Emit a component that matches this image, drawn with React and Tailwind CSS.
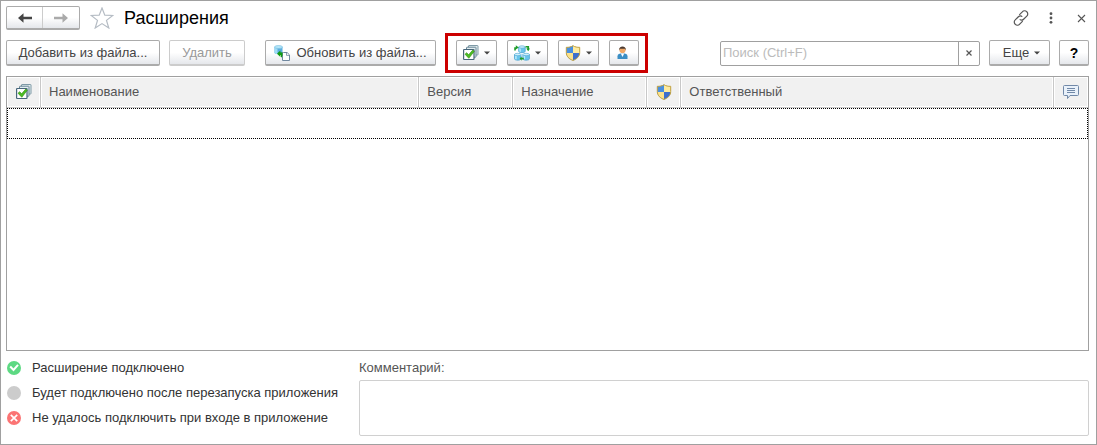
import { useState } from "react";

const buttonBase =
  "flex h-[26px] shrink-0 items-center justify-center rounded-xs border border-b-2 bg-linear-to-b from-white from-50% to-gray-200 whitespace-nowrap";
const button = `${buttonBase} border-[#ababab] text-[#444444]`;
const cell = "border-r border-b border-[#c8c8c8] shadow-[inset_0_0_0_1px_white]";
const headCell = `${cell} px-2 text-left font-normal`;

function Caret() {
  return (
    <svg width="6" height="4" viewBox="0 0 6 4" aria-hidden="true">
      <path d="M0 0.5h6L3 3.5z" fill="#444" />
    </svg>
  );
}

function ArrowIcon({ className }) {
  return (
    <svg width="14" height="10" viewBox="0 0 14 10" className={className} aria-hidden="true">
      <path d="M0 5L5.5 0.2V3.8H14v2.4H5.5v3.6z" fill="currentColor" />
    </svg>
  );
}

function StackCheckIcon() {
  return (
    <svg width="16" height="16" viewBox="0 0 16 16" fill="#e3edf0" aria-hidden="true">
      <rect x="5.5" y="0.5" width="9.5" height="9.5" rx="0.5" stroke="#7f9aa6" />
      <rect x="3.5" y="2.2" width="9.5" height="10" rx="0.5" stroke="#668594" />
      <rect x="0.6" y="4.5" width="10.4" height="10" rx="0.5" fill="#fff" stroke="#47667b" strokeWidth="1.2" />
      <path d="M2 9.2l1.7-1.5 1.9 2.1L9.800 5l1.500 1.300-5.500 7z" fill="#4bbd22" stroke="#2b8a0e" strokeWidth="0.6" />
    </svg>
  );
}

function ImportIcon() {
  return (
    <svg width="16" height="16" viewBox="0 0 16 16" aria-hidden="true">
      <path d="M0.500 2v5.800c0 1.800 8 1.800 8 0V2z" fill="#5cadde" />
      <path d="M0.500 2v5.800c0 .800 1.400 1.300 3 1.300V2z" fill="#9fdcf5" />
      <ellipse cx="4.500" cy="2" rx="4" ry="1.500" fill="#b4e6f8" stroke="#72bbdf" strokeWidth="0.600" />
      <path d="M3 8.800L6.400 5.600v2.200H9v4.400H7V9.900H6.400V12z" fill="#129c12" />
      <path d="M9.500 7.500h3.600l2.400 2.400v5.600H8.500v-8z" fill="#fff" stroke="#7188a0" />
      <path d="M12.500 7.800v2.600h2.600" fill="none" stroke="#7188a0" strokeWidth="0.800" />
      <path d="M4.500 8.200h3.200v2.600" fill="none" stroke="#129c12" strokeWidth="1.600" />
    </svg>
  );
}

function Cylinder({ x, y }) {
  return (
    <g transform={`translate(${x} ${y})`}>
      <path d="M0.500 1.800v4.200c0 1.800 6.500 1.800 6.500 0V1.800z" fill="#68c4ec" stroke="#4aa3d2" strokeWidth="0.800" />
      <path d="M1.100 2.600v3.700l1.600.500V3z" fill="#b4e8f9" />
      <ellipse cx="3.750" cy="1.700" rx="3.200" ry="1.200" fill="#cdf0fb" stroke="#4aa3d2" strokeWidth="0.600" />
    </g>
  );
}

function ClusterIcon() {
  return (
    <svg width="16" height="16" viewBox="0 0 16 16" aria-hidden="true">
      <Cylinder x={4.2} y={0.3} />
      <Cylinder x={0} y={7.8} />
      <Cylinder x={8.400} y={7.8} />
      <g fill="#1f9d2b">
        <path d="M0.200 5.500V2.200h1.600V0.300L4.800 2.500 1.800 4.500v1z" />
        <path d="M11.500 1h3.600v2.500H16L14.200 6.300 12.200 3.500h1.100V2.600h-1.800z" />
        <path d="M9.800 14.600H7.600v1.200L5.600 13.600 7.600 11.400v1.400h2.200z" />
      </g>
    </svg>
  );
}

function ShieldIcon() {
  return (
    <svg width="16" height="16" viewBox="0 0 16 16" aria-hidden="true">
      <path d="M8 0.600C6.200 1.900 3.600 2.500 1.300 2.300V7.500C1.300 11.500 4.300 14.200 8 15.500z" fill="#4a90e0" />
      <path d="M8 0.600C9.800 1.900 12.400 2.500 14.700 2.300V7.500C14.700 11.500 11.700 14.200 8 15.500z" fill="#fdeba0" />
      <path d="M1.300 8H8v7.500C4.300 14.200 1.500 11.500 1.300 8z" fill="#fce28a" />
      <path d="M8 8h6.700C14.500 11.500 11.700 14.200 8 15.500z" fill="#3d6fcc" />
      <path
        d="M8 0.700C6.200 1.900 3.600 2.500 1.300 2.300V7.500C1.300 11.500 4.300 14.200 8 15.400C11.700 14.200 14.700 11.500 14.700 7.500V2.300C12.400 2.500 9.800 1.900 8 0.700z"
        fill="none"
        stroke="#c0a040"
      />
    </svg>
  );
}

function UserIcon() {
  return (
    <svg width="16" height="16" viewBox="0 0 16 16" aria-hidden="true">
      <path d="M1.500 14v-2.800C1.500 9 3.500 8.500 6.500 8.500s5 .500 5 2.700V14z" fill="#3b8ec4" />
      <path d="M4.800 8.500L6.500 12 8.200 8.500z" fill="#fff" />
      <circle cx="6.500" cy="5" r="3.100" fill="#f0a868" />
      <path d="M3 5.500C2.600 0 10.400 0 10 5.500L9 3.800H4z" fill="#4b3b32" />
    </svg>
  );
}

function CommentIcon() {
  return (
    <svg width="16" height="14" viewBox="0 0 16 14" fill="none" stroke="#7189a8" aria-hidden="true">
      <path d="M1.500 0.500h13q1 0 1 1v8q0 1-1 1H7L4.500 13.500V10.500h-3q-1 0-1-1v-8q0-1 1-1z" fill="#e9f1fa" />
      <path d="M4 3.500h8M4 5.500h8M4 7.500h8" />
    </svg>
  );
}

function StatusIcon({ status }) {
  return (
    <svg width="14" height="14" viewBox="0 0 14 14" fill="none" stroke="#fff" strokeWidth="2" aria-hidden="true">
      {status === "ok" && (
        <>
          <circle cx="7" cy="7" r="7" fill="#5dd983" stroke="none" />
          <path d="M3.200 5.500L6.500 9 11 3.800" />
        </>
      )}
      {status === "pending" && <circle cx="7" cy="7" r="7" fill="#cccccc" stroke="none" />}
      {status === "failed" && (
        <>
          <circle cx="7" cy="7" r="7" fill="#fb7474" stroke="none" />
          <path d="M3.800 3.800l6.400 6.400M10.200 3.800l-6.400 6.400" strokeWidth="1.700" />
        </>
      )}
    </svg>
  );
}

const legend = [
  { status: "ok", text: "Расширение подключено" },
  { status: "pending", text: "Будет подключено после перезапуска приложения" },
  { status: "failed", text: "Не удалось подключить при входе в приложение" },
];

export default function App() {
  const [search, setSearch] = useState("");
  const [comment, setComment] = useState("");

  return (
    <div className="flex min-h-screen flex-col border border-[#a0a0a0] bg-white pt-[5px] pr-[7px] pb-2 pl-[5px] font-['Liberation_Sans',Arial,sans-serif] text-[13px] text-[#333333]">
      {/* Title */}
      <header className="flex h-6 items-center">
        <div className="flex h-full rounded-xs border border-b-2 border-[#ababab] bg-linear-to-b from-white from-50% to-gray-200">
          <button type="button" aria-label="Назад" className="flex w-9 items-center justify-center border-r border-[#cccccc]">
            <ArrowIcon className="text-[#444444]" />
          </button>
          <button type="button" aria-label="Вперед" className="flex w-9 items-center justify-center">
            <ArrowIcon className="rotate-180 text-[#aaaaaa]" />
          </button>
        </div>
        <button type="button" aria-label="В избранное" className="ml-2.5">
          <svg width="24" height="22" viewBox="0 0 24 22" fill="none" stroke="#b5bcc4" strokeWidth="1.200" aria-hidden="true">
            <path d="M12 1l2.800 7.200 8 .300-6.300 4.900 2.300 7.600L12 16.600 5.200 21l2.300-7.600L1.200 8.500l8-.300z" />
          </svg>
        </button>
        <h1 className="ml-2.5 text-lg text-black">Расширения</h1>
        <div className="mr-[3px] ml-auto flex items-center text-[#555555]">
          <button type="button" aria-label="Получить ссылку">
            <svg width="16" height="16" viewBox="0 0 16 16" fill="none" stroke="currentColor" strokeWidth="1.200" aria-hidden="true">
              <path d="M6.300 4.800L9.300 1.800a2.900 2.900 0 0 1 4.500 0 2.900 2.900 0 0 1 0 4.300L10.600 9.200a2.900 2.900 0 0 1-3.900.200" />
              <path d="M9.700 11.200L6.700 14.200a2.900 2.900 0 0 1-4.500 0 2.900 2.900 0 0 1 0-4.300L5.400 6.800a2.900 2.900 0 0 1 3.900-.200" />
            </svg>
          </button>
          <button type="button" aria-label="Меню" className="ml-5">
            <svg width="4" height="12" viewBox="0 0 4 12" fill="currentColor" aria-hidden="true">
              <circle cx="2" cy="1.700" r="1.400" />
              <circle cx="2" cy="6" r="1.400" />
              <circle cx="2" cy="10.300" r="1.400" />
            </svg>
          </button>
          <button type="button" aria-label="Закрыть" className="ml-6">
            <svg width="9" height="9" viewBox="0 0 9 9" stroke="currentColor" strokeWidth="1.100" aria-hidden="true">
              <path d="M1 1l7 7M8 1L1 8" />
            </svg>
          </button>
        </div>
      </header>

      {/* Toolbar */}
      <div className="mt-2.5 flex h-[26px] items-center">
        <button type="button" className={`${button} w-[154px]`}>Добавить из файла...</button>
        <button type="button" disabled className={`${buttonBase} ml-[9px] w-[76px] border-[#cccccc] text-[#999999]`}>
          Удалить
        </button>
        <button type="button" className={`${button} ml-5 w-[171px] gap-1.5`}>
          <ImportIcon />
          Обновить из файла...
        </button>

        <div className="ml-[9px] flex shrink-0 gap-2.5 border-3 border-[#cc0000] py-1 pr-1.5 pl-2">
          <button type="button" aria-label="Подключение" className={`${button} w-[41px] gap-[5px]`}>
            <StackCheckIcon />
            <Caret />
          </button>
          <button type="button" aria-label="Распределенная база" className={`${button} w-[41px] gap-[5px]`}>
            <ClusterIcon />
            <Caret />
          </button>
          <button type="button" aria-label="Безопасный режим" className={`${button} w-[41px] gap-[5px]`}>
            <ShieldIcon />
            <Caret />
          </button>
          <button type="button" aria-label="Ответственный" className={`${button} w-[30px]`}>
            <UserIcon />
          </button>
        </div>

        <div className="ml-auto flex h-[25px] w-[260px] rounded-xs border border-[#a0a0a0]">
          <input
            type="text"
            aria-label="Поиск"
            placeholder="Поиск (Ctrl+F)"
            value={search}
            onChange={(e) => setSearch(e.target.value)}
            className="min-w-0 flex-1 px-0.5 outline-none placeholder:text-[#bbbbbb]"
          />
          <button
            type="button"
            aria-label="Очистить"
            onClick={() => setSearch("")}
            className="flex w-[21px] items-center justify-center border-l border-[#a0a0a0]"
          >
            <svg width="6" height="6" viewBox="0 0 6 6" stroke="#555" strokeWidth="1.200" aria-hidden="true">
              <path d="M0.500 0.500l5 5M5.500 0.500l-5 5" />
            </svg>
          </button>
        </div>
        <button type="button" className={`${button} ml-[9px] w-[61px] gap-[5px] pl-1`}>
          Еще
          <Caret />
        </button>
        <button type="button" aria-label="Справка" className={`${button} ml-[9px] w-[30px] text-sm font-bold text-black`}>
          ?
        </button>
      </div>

      {/* Extensions list */}
      <div className="mt-2.5 flex-1 border border-[#a0a0a0]">
        <table className="w-full table-fixed border-separate border-spacing-0 text-[#555555]">
          <thead className="bg-[#f1f1f1]">
            <tr className="h-[31px]">
              <th className={`${cell} w-[34px]`} aria-label="Подключено">
                <span className="flex justify-center"><StackCheckIcon /></span>
              </th>
              <th className={`${headCell} w-[35%]`}>Наименование</th>
              <th className={`${headCell} w-[94px]`}>Версия</th>
              <th className={`${headCell} w-[134px]`}>Назначение</th>
              <th className={`${cell} w-[34px]`} aria-label="Безопасный режим">
                <span className="flex justify-center"><ShieldIcon /></span>
              </th>
              <th className={headCell}>Ответственный</th>
              <th className={`${cell} w-[34px] border-r-0`} aria-label="Комментарий">
                <span className="flex justify-center"><CommentIcon /></span>
              </th>
            </tr>
          </thead>
          <tbody>
            <tr>
              <td colSpan={7} className="h-[31px] border border-dotted border-black" />
            </tr>
          </tbody>
        </table>
      </div>

      <footer className="flex pt-[7px]">
        <ul className="w-[353px] shrink-0 space-y-[5px]">
          {legend.map((item) => (
            <li key={item.status} className="flex h-5 items-center gap-[11px] pl-px">
              <StatusIcon status={item.status} />
              {item.text}
            </li>
          ))}
        </ul>
        <div className="flex flex-1 flex-col gap-0.5">
          <label htmlFor="comment" className="h-5 leading-5 text-[#555555]">Комментарий:</label>
          <textarea
            id="comment"
            value={comment}
            onChange={(e) => setComment(e.target.value)}
            className="h-14 w-full resize-none rounded-xs border border-[#d0d0d0] p-1 outline-none"
          />
        </div>
      </footer>
    </div>
  );
}
